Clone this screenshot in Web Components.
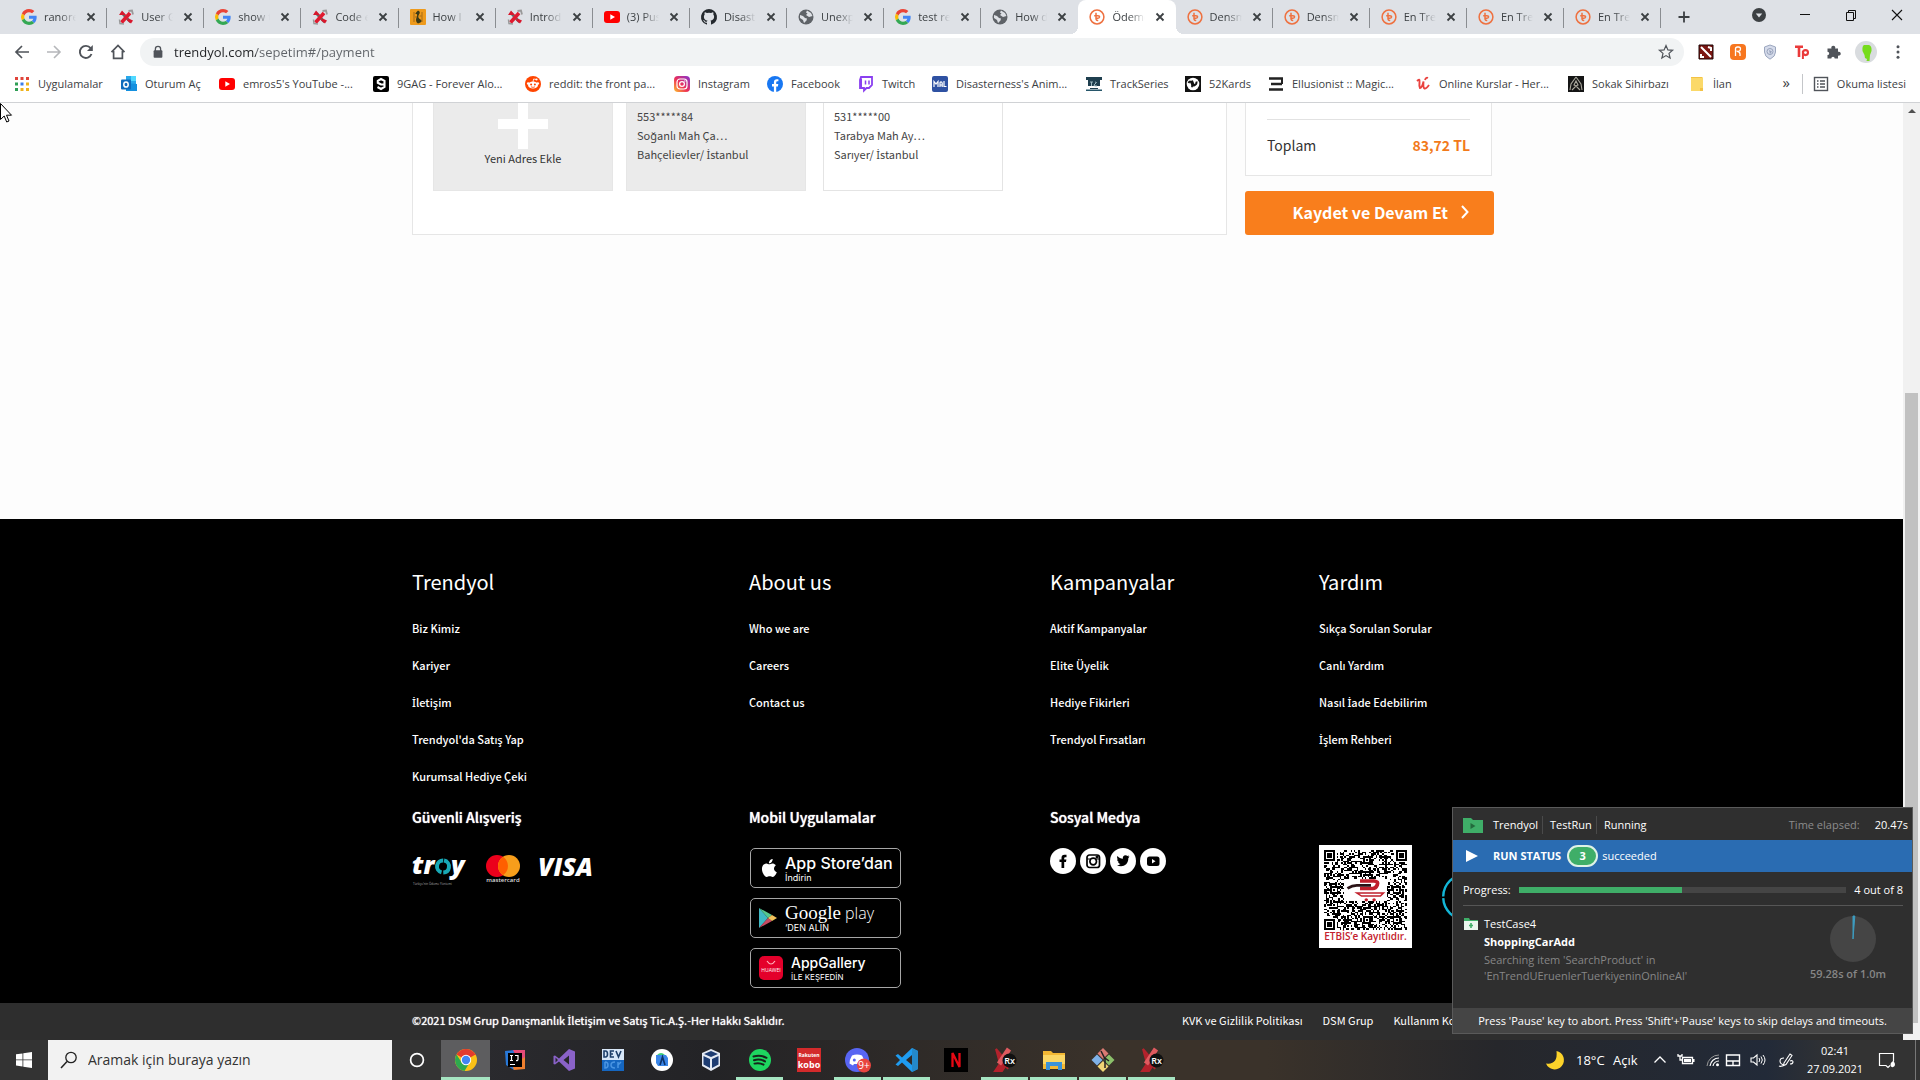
<!DOCTYPE html>
<html lang="tr">
<head>
<meta charset="utf-8">
<title>Ödeme - Trendyol</title>
<style>
html,body{margin:0;height:100%}
body{font-family:"Open Sans","Noto Sans",sans-serif;font-size:11px;overflow:hidden;
 --shop:"Noto Sans CJK SC","Noto Sans","Open Sans",sans-serif}
</style>
</head>
<body>
<desktop-screen></desktop-screen>
<script>
const ICONS = {
google:['0 0 48 48','<path fill="#ea4335" d="M24 9.5c3.5 0 6.700 1.200 9.200 3.600l6.900-6.900C35.900 2.400 30.500 0 24 0 14.600 0 6.500 5.400 2.600 13.200l8 6.200C12.400 13.700 17.700 9.500 24 9.500z"/><path fill="#4285f4" d="M47 24.500c0-1.600-.2-3.100-.4-4.500H24v9h12.900c-.6 3-2.200 5.500-4.700 7.200l7.700 6C44.400 38 47 31.800 47 24.500z"/><path fill="#fbbc05" d="M10.500 28.600a14.500 14.500 0 0 1 0-9.200l-8-6.200a24 24 0 0 0 0 21.600z"/><path fill="#34a853" d="M24 48c6.500 0 11.900-2.100 15.900-5.800l-7.700-6c-2.200 1.500-4.900 2.300-8.200 2.300-6.300 0-11.600-4.200-13.500-9.900l-8 6.200C6.500 42.600 14.600 48 24 48z"/>'],
ranorex:['0 0 16 16','<path d="M3.500 3.500l9 9.500" stroke="#666" stroke-width="2.600"/><path d="M12 4L3.500 13.500" stroke="#e01a2f" stroke-width="3.600"/><path d="M1 6l3-4.500L8 6z" fill="#d8172c"/><path d="M10.500 9.500l4.500 2-2 3-4-3z" fill="#d8172c"/><path d="M10.500 2l3.500-.5 1 4" fill="none" stroke="#999" stroke-width="1.800"/><path d="M1.500 10.500l.5 4 4 .5" fill="none" stroke="#999" stroke-width="1.500"/>'],
stack:['0 0 16 16','<rect width="16" height="16" rx="1" fill="#ee9a1c"/><path d="M8 1.500q3 1 1 4t1.500 5-2.500 4q-3-2-1.500-6T6 5t2-3.500z" fill="#3c3a17"/><path d="M4 3v10M12 3v10M5 8h2M9.500 7h2" stroke="#a56a16"/>'],
youtube:['0 0 16 16','<rect y="2" width="16" height="12" rx="3" fill="#f00"/><path fill="#fff" d="M6.300 5.300v5.400L11 8z"/>'],
github:['0 0 16 16','<path fill="#24292e" d="M8 0a8 8 0 0 0-2.500 15.600c.4.100.5-.2.500-.4v-1.500c-2.200.5-2.700-.9-2.700-.9-.4-.9-.9-1.200-.9-1.200-.7-.5.100-.5.100-.5.800.1 1.200.8 1.200.8.700 1.200 1.900.9 2.300.7.100-.5.300-.9.500-1.100-1.800-.2-3.600-.9-3.600-4 0-.9.300-1.600.8-2.100-.1-.2-.4-1 .1-2.100 0 0 .7-.2 2.200.8a7.500 7.500 0 0 1 4 0c1.500-1 2.200-.8 2.200-.8.400 1.100.2 1.900.1 2.100.5.600.8 1.300.8 2.100 0 3.100-1.900 3.800-3.700 4 .3.200.6.700.6 1.500v2.200c0 .2.100.5.500.4A8 8 0 0 0 8 0z"/>'],
globe:['0 0 16 16','<circle cx="8" cy="8" r="7.500" fill="#5f6368"/><path fill="#dee1e6" d="M2 6l3 1 2 2 2 .5-.5 2L6 14l-1-3-3-2zM9 1.500l-1 2 1.500 1L8 6l3 2 3.500-1L13 4z"/>'],
trendyol:['0 0 16 16','<circle cx="8" cy="8" r="6.900" fill="none" stroke="#ee7140" stroke-width="1.500"/><path d="M7 3.800v5.700q0 2.300 2.200 1.800M5.200 6.800h3.600q2 0 1.700 1.400T7.500 9.200" fill="none" stroke="#ee7140" stroke-width="1.500"/>'],
close:['0 0 16 16','<path d="M4.500 4.500l7 7M11.500 4.500l-7 7" stroke="#3c4043" stroke-width="1.800"/>'],
plus:['0 0 16 16','<path d="M8 2.500v11M2.500 8h11" stroke="#3c4043" stroke-width="1.800"/>'],
drop:['0 0 16 16','<circle cx="8" cy="8" r="7" fill="#3c4043"/><path d="M4.800 6.500h6.400L8 10.500z" fill="#dee1e6"/>'],
min:['0 0 16 16','<path d="M3 7.500h10" stroke="#111"/>'],
restore:['0 0 16 16','<path d="M3.500 5.500h7v8h-7zM5.500 5.500v-2h7v8h-2" fill="none" stroke="#111"/>'],
winclose:['0 0 16 16','<path d="M3 3l10 10M13 3L3 13" stroke="#111" stroke-width="1.100"/>'],
back:['0 0 16 16','<path d="M15 8H2M8 2L2 8l6 6" fill="none" stroke="#50545a" stroke-width="1.700"/>'],
fwd:['0 0 16 16','<path d="M1 8h13M8 2l6 6-6 6" fill="none" stroke="#b5b7ba" stroke-width="1.600"/>'],
reload:['0 0 16 16','<path d="M13.500 10A6 6 0 1 1 12.600 4.200" fill="none" stroke="#50545a" stroke-width="1.900"/><path d="M14.800 1v6H9z" fill="#50545a"/>'],
home:['0 0 16 16','<path d="M1.500 8.200L8 1.500l6.500 6.700M3.600 7v7.300h8.800V7" fill="none" stroke="#50545a" stroke-width="1.700"/>'],
lock:['0 0 16 16','<rect x="3" y="6" width="10" height="8.500" rx="1" fill="#50545a"/><path d="M5 7V4.500a3 3 0 0 1 6 0V7" fill="none" stroke="#50545a" stroke-width="1.500"/>'],
star:['0 0 16 16','<path d="M8 1.600l1.900 4.300 4.700.4-3.600 3.100 1.100 4.600L8 11.600 3.900 14 5 9.400 1.400 6.300l4.700-.4z" fill="none" stroke="#50545a" stroke-width="1.200"/>'],
dota:['0 0 16 16','<rect x="1" y="1" width="14" height="14" fill="#7c1712"/><path d="M3 3l10 10M10 3l3 1v3M3 10v3h3" stroke="#fff" stroke-width="2" fill="none"/><path d="M1 1h14v14H1z" fill="none" stroke="#1c0706"/>'],
honey:['0 0 16 16','<rect width="16" height="16" rx="4" fill="#f7761f"/><path d="M5.500 12V5q0-2 2-2h1q2 0 2 2t-2 2.500q-1.500.5-1.500-1M8 7.500q2.500.5 2 4.500" fill="none" stroke="#fff" stroke-width="1.300"/>'],
shield:['0 0 16 16','<path d="M8 1l5.500 2v5q0 4.500-5.500 7.200Q2.500 12.500 2.500 8V3z" fill="#d5dbea" stroke="#9ba6be"/><circle cx="8" cy="7.500" r="3" fill="none" stroke="#97a2bb"/><path d="M7 6l3 1.500L8 10z" fill="#97a2bb"/>'],
tp:['0 0 16 16','<path d="M1 2.800h8M5 2.800V13" stroke="#ea3a3a" stroke-width="2.600"/><circle cx="11.500" cy="8.600" r="2.500" fill="none" stroke="#ea3a3a" stroke-width="2.100"/><path d="M8.900 7v8" stroke="#ea3a3a" stroke-width="2"/>'],
puzzle:['0 0 16 16','<path fill="#50545a" d="M1.500 4.500h4a2 2 0 1 1 3.600 0H12v3.300a2 2 0 1 1 0 3.700v3H8.700a1.700 1.700 0 1 0-3.400 0H1.500v-3.400a1.700 1.700 0 1 0 0-3.400z"/>'],
avatar:['0 0 22 22','<circle cx="11" cy="11" r="11" fill="#d9dcdf"/><path d="M9 4h5q3 1 2.500 6L15 14l-.5 6h-3l.5-2-2-1-.5-3-2-4q-.5-5 1.500-6z" fill="#76dc1b"/>'],
menu:['0 0 16 16','<g fill="#50545a"><circle cx="8" cy="2.800" r="1.500"/><circle cx="8" cy="8" r="1.500"/><circle cx="8" cy="13.200" r="1.500"/></g>'],
apps:['0 0 16 16','<g><path fill="#e0443a" d="M1 1h3v3H1zM6.500 1h3v3h-3zM12 1h3v3h-3z"/><path fill="#3b7de8" d="M6.500 6.500h3v3h-3z"/><path fill="#2f9e55" d="M1 6.500h3v3H1zM1 12h3v3H1z"/><path fill="#efb31c" d="M12 6.500h3v3h-3zM6.500 12h3v3h-3zM12 12h3v3h-3z"/></g>'],
outlook:['0 0 16 16','<path d="M5 0h10v8H5z" fill="#28a8ea"/><path d="M10 0h5v5h-5z" fill="#50d9ff"/><path d="M5 7l11 1v7H5z" fill="#1490df"/><rect y="3.500" width="10" height="10" rx="1" fill="#0f6cbd"/><ellipse cx="5" cy="8.500" rx="2.200" ry="2.600" fill="none" stroke="#fff" stroke-width="1.500"/>'],
gag:['0 0 16 16','<rect width="16" height="16" rx="2" fill="#000"/><path d="M11.500 8.500L8 8.500 4.800 6.800V4.800L8 3l3.500 1.800v6L8 13l-3.500-2" fill="none" stroke="#fff" stroke-width="2.100"/>'],
reddit:['0 0 16 16','<circle cx="8" cy="8" r="8" fill="#ff4500"/><ellipse cx="8" cy="9" rx="5" ry="3.600" fill="#fff"/><circle cx="3.200" cy="7.500" r="1.300" fill="#fff"/><circle cx="12.800" cy="7.500" r="1.300" fill="#fff"/><circle cx="11.500" cy="3.500" r="1.100" fill="#fff"/><path d="M8 6l.6-3 2.900.5" stroke="#fff" fill="none" stroke-width=".8"/><circle cx="6.100" cy="8.500" r="1" fill="#ff4500"/><circle cx="9.900" cy="8.500" r="1" fill="#ff4500"/><path d="M6 10.800q2 1.200 4 0" stroke="#ff4500" fill="none" stroke-width=".8"/>'],
instagram:['0 0 16 16','<linearGradient id="g" x1="0" y1="1" x2="1" y2="0"><stop offset="0" stop-color="#fdc22f"/><stop offset=".45" stop-color="#ed2f58"/><stop offset="1" stop-color="#8334d2"/></linearGradient><rect width="16" height="16" rx="4" fill="url(#g)"/><rect x="3" y="3" width="10" height="10" rx="3" fill="none" stroke="#fff" stroke-width="1.200"/><circle cx="8" cy="8" r="2.400" fill="none" stroke="#fff" stroke-width="1.200"/><circle cx="10.900" cy="5" r=".7" fill="#fff"/>'],
facebook:['0 0 16 16','<circle cx="8" cy="8" r="8" fill="#1877f2"/><path fill="#fff" d="M6.900 16v-5.600H5V8h1.900V6.300c0-2 1.100-3.100 2.900-3.100l1.600.1v2h-1q-1.200 0-1.200 1.200V8h2.100l-.4 2.400H9.200V16z"/>'],
twitch:['0 0 16 16','<path d="M3 1h11v8l-3 3H8.500L6 14.500V12H2V4z" fill="#fff" stroke="#8a3ff0" stroke-width="1.800"/><path d="M2 4l2-2v9H2z" fill="#8a3ff0"/><path d="M7.500 4.500v4M11 4.500v4" stroke="#8a3ff0" stroke-width="1.500"/>'],
mal:['0 0 16 16','<rect width="16" height="16" rx="2" fill="#2e51a2"/><path d="M2 11V5.500l2 2.500 2-2.500V11M8 11V7q0-1.200 1-1.200T10.200 7v4M8 9h2M12 5v5.500h2.500" fill="none" stroke="#fff" stroke-width="1.200"/>'],
track:['0 0 16 16','<path d="M0 1h16v3H0zM2 4h12v6H2zM4 12h8v1H4z" fill="#1f3f4f"/><path d="M0 13.500h16V15H0z" fill="#27566a"/><path d="M4 6h3M5.500 6v4M9 6q3 0 0 2t2 2" stroke="#9db7bf" fill="none"/>'],
kards:['0 0 16 16','<rect width="16" height="16" fill="#111"/><circle cx="8" cy="8" r="6.300" fill="#fff"/><path d="M3.500 7q1.500-3 3 0t0 4M7 4.500l2 5q3-1 2.500-4" fill="none" stroke="#111" stroke-width="1.900"/>'],
ellusion:['0 0 16 16','<path d="M1 2.500h14M3 8h11M1 13.500h14" stroke="#222" stroke-width="2.700"/><path d="M14 2v6" stroke="#222" stroke-width="2"/>'],
udemy:['0 0 16 16','<path d="M2 5q3-3 2.500 1T5 12q2 0 3.500-6.500Q8 12 9.500 12.500T14 9M10 4q1-3 3-2" fill="none" stroke="#e9423f" stroke-width="1.900"/>'],
sokak:['0 0 16 16','<rect width="16" height="16" fill="#151515"/><path d="M8 1L3 8l-1 6M8 1l5 7 1 6M8 5l-2 4 2 1 2-1zM4 14l4-4 4 4" fill="none" stroke="#aaa89d" stroke-width="1.100"/>'],
folder:['0 0 16 16','<path d="M2 1h11q1 0 1 1v12q0 1-1 1H2z" fill="#fbd969"/><path d="M2 1h11v1H2zM11 12h3v3h-3z" fill="#f3c245"/>'],
list:['0 0 16 16','<rect x="1.500" y="1.500" width="13" height="13" fill="none" stroke="#50545a" stroke-width="1.400"/><path d="M4 5h1.500M7 5h5M4 8h1.500M7 8h5M4 11h1.500M7 11h5" stroke="#50545a" stroke-width="1.300"/>'],
chevron:['0 0 10 16','<path d="M2 2l5.500 6L2 14" fill="none" stroke="#fff" stroke-width="2"/>'],
bigplus:['0 0 50 50','<path d="M20 0h10v20h20v10H30v20H20V30H0V20h20z" fill="#fff"/>'],
scrollup:['0 0 16 16','<path d="M4 10h8L8 6z" fill="#505050"/>'],
mastercard:['0 0 36 28','<circle cx="12" cy="11" r="11" fill="#eb001b"/><circle cx="24" cy="11" r="11" fill="#f79e1b"/><path d="M18 1.800a11 11 0 0 1 0 18.400 11 11 0 0 1 0-18.400z" fill="#ff5f00"/><text x="18" y="27" fill="#ddd" font-family="Open Sans" font-weight="600" font-size="6" text-anchor="middle">mastercard</text>'],
visa:['0 0 56 26','<text x="0" y="20" fill="#fff" font-family="Open Sans" font-style="italic" font-weight="800" font-size="25">VISA</text>'],
troy:['0 0 56 32','<g font-family="Open Sans" font-weight="800" font-style="italic" fill="#fff"><text x="0" y="21" font-size="25">tr</text><text x="39" y="21" font-size="25">y</text></g><circle cx="31" cy="13.500" r="6" fill="none" stroke="#18a9b7" stroke-width="4" stroke-dasharray="17 1.850" transform="rotate(-80 31 13.500)"/><text x="1" y="32" fill="#aaa" font-family="Open Sans" font-size="3">Türkiye’nin Ödeme Yöntemi</text>'],
apple:['0 0 18 22','<path fill="#fff" d="M15 11.600c0-2.200 1.800-3.300 1.900-3.400-1-1.500-2.600-1.700-3.200-1.800-1.400-.1-2.700.8-3.400.8s-1.800-.8-2.900-.8C5.900 6.500 4.500 7.300 3.700 8.700c-1.600 2.800-.4 6.800 1.100 9 .8 1.100 1.700 2.300 2.900 2.300s1.600-.7 3-.7 1.800.7 3 .7 2-1.100 2.800-2.200c.9-1.300 1.200-2.500 1.300-2.600-.1 0-2.800-1-2.800-3.600zM12.700 4.900c.6-.8 1.100-1.800.9-2.900-.9 0-2 .6-2.700 1.400-.6.700-1.100 1.800-1 2.800 1.100.1 2.200-.5 2.800-1.300z"/>'],
play:['0 0 18 20','<path d="M0 0l9 10-9 10z" fill="#3fb8c4"/><path d="M0 0l13 7-4 3z" fill="#55c68e"/><path d="M0 20l13-7-4-3z" fill="#c84a62"/><path d="M13 7l5 3-5 3-4-3z" fill="#f2c25b"/>'],
huawei:['0 0 24 24','<rect width="24" height="24" rx="5" fill="#e4002b"/><path d="M8 5q4 6 8 0" fill="none" stroke="#ffb3bd" stroke-width="1.200"/><text x="12" y="15.500" fill="#fff" font-family="Open Sans" font-size="5" text-anchor="middle">HUAWEI</text>'],
sfb:['0 0 26 26','<circle cx="13" cy="13" r="13" fill="#fff"/><path d="M11.500 20v-6H9.500v-2.500h2V9.700q0-3 3-3h2v2.500h-1.300q-1 0-1 1v1.300h2.200L16 14h-1.800v6z" fill="#000"/>'],
sig:['0 0 26 26','<circle cx="13" cy="13" r="13" fill="#fff"/><rect x="7" y="7" width="12.500" height="12.500" rx="2.500" fill="none" stroke="#000" stroke-width="1.700"/><circle cx="13.200" cy="13.500" r="3.300" fill="none" stroke="#000" stroke-width="1.700"/><path d="M7 11h4M15.500 11h4M16 8.300h2v1.500h-2z" stroke="#000"/>'],
stw:['0 0 26 26','<circle cx="13" cy="13" r="13" fill="#fff"/><path d="M19.500 8.500l-1.200 1.800c.2 5-3.500 8-7.200 8-1.700 0-3.100-.4-4.300-1.100 1.500 0 2.600-.3 3.700-1.200-1.300-.2-2-.9-2.400-1.900h1.100c-1.400-.6-2-1.500-2.100-2.900l1 .3C6.900 10.400 6.800 9 7.500 7.900c1.500 1.700 3.200 2.600 5.400 2.800-.4-2 .8-3.400 2.600-3.400.8 0 1.400.3 2 .8l1.600-.6-.9 1.300z" fill="#000"/>'],
syt:['0 0 26 26','<circle cx="13" cy="13" r="13" fill="#fff"/><rect x="7" y="8.500" width="12.500" height="9.500" rx="2.500" fill="#000"/><path d="M12 11v4.500l3.500-2.200z" fill="#fff"/>'],
ring:['0 0 48 48','<circle cx="24" cy="24" r="22.800" fill="none" stroke="#13b5d6" stroke-width="2.400" stroke-dasharray="70 1.630"/>'],
testfolder:['0 0 20 16','<path d="M0 1h8l2 2h10v13H0z" fill="#3fae68"/><path d="M7.500 6v6l5-3z" fill="#236a3c"/>'],
testfolder2:['0 0 14 12','<path d="M0 0h5l1 2h8v10H0z" fill="#3fae68"/><path d="M0 3h14v9H0z" fill="#e9f7ee"/><path d="M7 5v5M5 7.500h4" stroke="#3fae68" stroke-width="1.600"/>'],
run:['0 0 12 12','<path d="M0 0v12l12-6z" fill="#fff"/>'],
pie:['0 0 46 46','<circle cx="23" cy="23" r="23" fill="#454545"/><path d="M23 23V0h1.800z" fill="#3d9cc0" stroke="#3d9cc0"/>'],
cursor:['0 0 12 20','<path d="M.5.500v16l3.700-3.500 2.500 6 2.300-1-2.500-5.800H11.500z" fill="#fff" stroke="#000"/>'],
windows:['0 0 16 16','<path fill="#fff" d="M0 2.300l6.500-.9v6.100H0zM7.300 1.300L16 0v7.500H7.300zM0 8.300h6.500v6.200L0 13.600zM7.300 8.300H16V16l-8.700-1.300z"/>'],
search:['0 0 18 18','<circle cx="11" cy="6.500" r="5.200" fill="none" stroke="#222" stroke-width="1.300"/><path d="M7 10.500L1 17" stroke="#222" stroke-width="1.500"/>'],
cortana:['0 0 24 24','<circle cx="12" cy="12" r="6.400" fill="none" stroke="#fff" stroke-width="1.700"/>'],
chrome:['0 0 24 24','<circle cx="12" cy="12" r="11" fill="#fbc116"/><path d="M12 12L2.500 6.500A11 11 0 0 1 21.500 6.500z" fill="#e33b2e"/><path d="M2.500 6.500a11 11 0 0 0 8 16.400L16 14 8 15z" fill="#2da94f"/><path d="M12 7h9.800a11 11 0 0 0-.5-1H8z" fill="#e33b2e"/><circle cx="12" cy="12" r="5.200" fill="#fff"/><circle cx="12" cy="12" r="4.200" fill="#4285f4"/>'],
intellij:['0 0 24 24','<path d="M2 3l9-1v20l-8-5z" fill="#2878d8"/><path d="M10 2h12v9l-7 2z" fill="#e44b78"/><path d="M22 9v12l-11 1-2-5z" fill="#ee7f2f"/><rect x="5" y="5" width="14" height="14" fill="#000"/><path d="M7 7.500h3M8.500 7.500v5M7 12.500h3M12 7.500h3v4q0 1.200-2 1M7 16.500h5" fill="none" stroke="#fff" stroke-width="1.200"/>'],
vs:['0 0 24 24','<path d="M17 1l6 2.500v17L17 23 7 13.500 3 16.500 1.500 16V8L3 7.500l4 3zM17 7.500L11.500 12l5.500 4.500zM3.500 9.500v5L6 12z" fill="#8a62c9" fill-rule="evenodd"/>'],
dev:['0 0 24 24','<rect x="1" y="1" width="22" height="11" fill="#d7e6f8"/><rect x="1" y="12" width="22" height="11" fill="#1566c0"/><path d="M3 3v6h1.500q2 0 2-3t-2-3zM13 3H9.500v6H13M9.500 6H12M15 3l2.500 6L20 3" fill="none" stroke="#1d3e69" stroke-width="1.600"/><path d="M4 14v6q3 0 3-3t-3-3M14 14q-4 0-4 3t4 3M17 14v6M20 14l-3 3" fill="none" stroke="#4a95e2" stroke-width="1.500"/>'],
android:['0 0 24 24','<circle cx="12" cy="12" r="11" fill="#fff"/><path d="M6 7h10l2 3v8H8l-2-3z" fill="#3a86e8"/><path d="M7 7q4-4 8 0z" fill="#3ecf79"/><path d="M10 17l2.500-8 2.500 8" fill="none" stroke="#0d3269" stroke-width="1.700"/>'],
vbox:['0 0 24 24','<path d="M12 1l9 4v13l-9 5-9-5V5z" fill="#e4eaf4"/><path d="M12 3l7 3-7 3-7-3zM4.500 8L11 11v9l-6.500-3.500zM19.500 8L13 11v9l6.500-3.500z" fill="#1d3c72"/>'],
spotify:['0 0 24 24','<circle cx="12" cy="12" r="11" fill="#1ed760"/><path d="M5.500 8.500q7-2 13 1.300M6 12.200q6-1.600 11 1.200M6.500 15.600q5-1.200 9 1" fill="none" stroke="#16251b" stroke-width="2" stroke-linecap="round"/>'],
kobo:['0 0 24 24','<rect width="24" height="24" fill="#d32a2b"/><text x="12" y="9" fill="#fff" font-family="Open Sans" font-weight="700" font-size="5" text-anchor="middle">Rakuten</text><text x="12" y="20" fill="#fff" font-family="Open Sans" font-weight="700" font-size="9" text-anchor="middle">kobo</text>'],
discord:['0 0 26 24','<circle cx="12" cy="12" r="12" fill="#5865f2"/><path d="M7 7.500q5-2 10 0 2.500 4 2.500 8l-3.500 2-1-1.500H9L8 17.500l-3.500-2q0-4 2.500-8z" fill="#fff"/><circle cx="9.300" cy="12" r="1.500" fill="#5865f2"/><circle cx="19" cy="17.500" r="7" fill="#e8453f"/><text x="19" y="21" fill="#fff" font-family="Open Sans" font-size="10" text-anchor="middle">9+</text>'],
vscode:['0 0 24 24','<path d="M17 0l6 3v18l-6 3L7 14.500 3 18l-2.500-1.500L5 12 .500 7.500 3 6l4 3.500zM17 7l-6 5 6 5z" fill="#1f9cf0" fill-rule="evenodd"/><path d="M17 0l6 3v18l-6 3z" fill="#2489ca"/>'],
netflix:['0 0 24 24','<rect width="24" height="24" fill="#000"/><path d="M8.500 19V5L15.500 19V5" fill="none" stroke="#e50914" stroke-width="2.300"/>'],
rx:['0 0 24 24','<path d="M3 1l6 7-3 4zM2 23l8-12 5 3-6 9zM9 12l6 9" fill="#b3222c" stroke="#b3222c" stroke-width="2"/><path d="M16 1L6 16" stroke="#e05a5f" stroke-width="5"/><circle cx="16.500" cy="12.500" r="7" fill="#111"/><text x="16.500" y="16" fill="#fff" font-family="Open Sans" font-weight="600" font-size="9" text-anchor="middle">Rx</text>'],
explorer:['0 0 24 24','<path d="M1 3h8l2 2h12v16H1z" fill="#f3b834"/><path d="M1 7h22v9H1z" fill="#fbd765"/><path d="M4 14h16v8h-4v-4H8v4H4z" fill="#3b93d9"/>'],
git:['0 0 24 24','<path d="M12 0l5.500 5.500L12 11 6.500 5.500z" fill="#d97a72"/><path d="M6 6.500l5.500 5.500L6 17.500.500 12z" fill="#7fb2e8"/><path d="M18 6.500l5.500 5.500-5.500 5.500-5.500-5.500z" fill="#8bc06a"/><path d="M12 13l5.500 5.500L12 24l-5.500-5.500z" fill="#f0d676"/><path d="M10 3l4 8v9M14 10l4 3" fill="none" stroke="#222" stroke-width="1.500"/>'],
moon:['0 0 20 20','<path d="M11.500 1A9.300 9.300 0 1 1 1 13.500Q13 15 11.500 1z" fill="#fcd32a"/>'],
up:['0 0 16 16','<path d="M2.500 10.500L8 5l5.500 5.500" fill="none" stroke="#fff" stroke-width="1.300"/>'],
battery:['0 0 18 16','<path d="M5.500 5.500h10v6h-10z" fill="none" stroke="#fff" stroke-width="1.300"/><path d="M7 7h7v3H7zM16 7h1.500v3H16z" fill="#fff"/><path d="M1 2v2h4V2M3 4v4h3" fill="none" stroke="#fff" stroke-width="1.300"/>'],
wifi:['0 0 16 16','<path d="M2 14A12 12 0 0 1 14 3" fill="none" stroke="#999"/><path d="M5 14a9 9 0 0 1 9-8M8 14a6 6 0 0 1 6-5" fill="none" stroke="#fff" stroke-width="1.200"/><circle cx="12.500" cy="12.800" r="1.500" fill="#fff"/>'],
touch:['0 0 16 16','<path d="M1.500 3h13v10.500h-13zM1.500 9h13M8 9v4" fill="none" stroke="#fff" stroke-width="1.400"/>'],
speaker:['0 0 16 16','<path d="M1 6h2.500L7 3v10L3.500 10H1z" fill="none" stroke="#fff" stroke-width="1.100"/><path d="M9 6q1.500 2 0 4M11 4.500q2.700 3.500 0 7M13 3q4 5 0 10" fill="none" stroke="#fff"/>'],
pen:['0 0 16 16','<path d="M6 11l6-9 2 1.500-6 9-2.500 1zM6 6q-4 0-4 3t4 4q-3 2-5 1M12 9q3-1 3 1t-3 2" fill="none" stroke="#fff" stroke-width="1.100"/>'],
notice:['0 0 18 18','<path d="M12 14.500l-2 2-2-2H1.500v-12h14V10" fill="none" stroke="#fff" stroke-width="1.200"/><path d="M15.500 9.500q-3 2-3 4.500a2 2 0 0 0 2.700 2q2-.6 1.800-3z" fill="#fff"/>']
};

/* The shop typeface has no precomposed dotted capital I, so that letter is set in Noto Sans. */
const dotted = text => text.replace(/İ/g, '<span class="i">İ</span>');

const define = (name, css, html, init) => {
  const tpl = document.createElement('template');
  tpl.innerHTML = `<style>:host{display:block;box-sizing:border-box}*{box-sizing:border-box}a{color:inherit;text-decoration:none}button{border:0;padding:0;background:none;font:inherit;color:inherit}.i{font-family:"Noto Sans","Open Sans",sans-serif}${css}</style>${html}`;
  customElements.define(name, class extends HTMLElement {
    connectedCallback() {
      if (this.shadowRoot) return;
      const root = this.attachShadow({mode:'open'});
      root.append(tpl.content.cloneNode(true));
      if (init) init(root, this);
    }
  });
};

define('ui-icon', ':host{display:block;flex:none}svg{display:block;width:100%;height:100%;overflow:visible}', '', (root, el) => {
  const [box, body] = ICONS[el.getAttribute('name')];
  const [, , w, h] = box.split(' ');
  el.style.width = (el.getAttribute('w') || w) + 'px';
  el.style.height = (el.getAttribute('h') || h) + 'px';
  root.innerHTML += `<svg viewBox="${box}" aria-hidden="true">${body}</svg>`;
});

define('browser-tab', `
:host{flex:1 1 0;min-width:0;position:relative;height:34px}
.tab{display:flex;align-items:center;height:100%;padding:0 8px 0 11px;gap:7px;border-radius:8px 8px 0 0}
.tab span{flex:1;min-width:0;overflow:hidden;white-space:nowrap;line-height:20px;font-size:11px;color:#3c4043;-webkit-mask-image:linear-gradient(90deg,#000 50%,transparent)}
:host(:not([active]):not([plain])) .tab{background:linear-gradient(#8a8d91,#8a8d91) right 8px/1px 20px no-repeat}
:host([active]) .tab{background:#fff}
:host([active])::before,:host([active])::after{content:"";position:absolute;bottom:0;width:8px;height:8px}
:host([active])::before{left:-8px;background:radial-gradient(circle at 0 0,transparent 8px,#fff 8px)}
:host([active])::after{right:-8px;background:radial-gradient(circle at 100% 0,transparent 8px,#fff 8px)}`,
'<div class="tab" role="tab"><slot name="icon"></slot><span><slot></slot></span><button aria-label="Kapat"><ui-icon name="close"></ui-icon></button></div>');

define('window-tools', `
:host{display:flex;width:259px;flex:none;justify-content:space-between}
div{display:flex}
button{display:flex;align-items:center;justify-content:center;height:30px;width:46px}
.new{height:34px}`,
`<button class="new" aria-label="Yeni sekme"><ui-icon name="plus"></ui-icon></button>
<div><button aria-label="Sekme ara"><ui-icon name="drop"></ui-icon></button><button aria-label="Küçült"><ui-icon name="min"></ui-icon></button><button aria-label="Geri yükle"><ui-icon name="restore"></ui-icon></button><button aria-label="Kapat"><ui-icon name="winclose"></ui-icon></button></div>`);

define('tab-strip', `
:host{display:flex;background:#dee1e6;padding-left:10px;height:34px}
.tabs{display:flex;flex:1;min-width:0}`, `<div class="tabs" role="tablist"></div><window-tools></window-tools>`, root => {
  const tabs = [['google','ranorex'],['ranorex','User Guide'],['google','show text'],['ranorex','Code ex'],['stack','How I do'],['ranorex','Introduc'],['youtube','(3) Pusa'],['github','Disaster'],['globe','Unexpec'],['google','test rem'],['globe','How do'],['trendyol','Ödeme',1],['trendyol','Densmo'],['trendyol','Densmo'],['trendyol','En Trend'],['trendyol','En Trend'],['trendyol','En Trend']];
  root.querySelector('.tabs').innerHTML = tabs.map(([i,t,a], n) => `<browser-tab${a?' active':n===10?' plain':''}><ui-icon slot="icon" name="${i}" w="16" h="16"></ui-icon>${t}</browser-tab>`).join('');
});

define('nav-bar', `
:host{display:flex;align-items:center;height:36px;padding:0 6px;background:#fff}
button{display:flex;align-items:center;justify-content:center;width:32px;height:28px;flex:none}
form{display:flex;align-items:center;flex:1;height:28px;margin:0 6px;padding:0 2px 0 11px;background:#f1f3f4;border-radius:14px}
input{flex:1;border:0;outline:0;padding:0 0 0 9px;font:13px/20px "Open Sans",sans-serif;color:#202124;-webkit-text-fill-color:transparent;background:linear-gradient(90deg,#202124 91px,#5f6368 91px);-webkit-background-clip:text;background-clip:text}`,
`<button aria-label="Geri"><ui-icon name="back"></ui-icon></button><button aria-label="İleri"><ui-icon name="fwd"></ui-icon></button><button aria-label="Yenile"><ui-icon name="reload"></ui-icon></button><button aria-label="Ana sayfa"><ui-icon name="home"></ui-icon></button>
<form><ui-icon name="lock" w="14" h="14"></ui-icon><input aria-label="Adres" value="trendyol.com/sepetim#/payment"><button type="button" aria-label="Yer işareti"><ui-icon name="star"></ui-icon></button></form>
<button aria-label="Dota"><ui-icon name="dota"></ui-icon></button><button aria-label="Honey"><ui-icon name="honey"></ui-icon></button><button aria-label="Kalkan"><ui-icon name="shield"></ui-icon></button><button aria-label="Tp"><ui-icon name="tp"></ui-icon></button><button aria-label="Uzantılar"><ui-icon name="puzzle"></ui-icon></button><button aria-label="Profil"><ui-icon name="avatar"></ui-icon></button><button aria-label="Menü"><ui-icon name="menu"></ui-icon></button>`);

define('bookmark-bar', `
:host{display:flex;height:33px;padding:0 14px 4px 14px;background:#fff;border-bottom:1px solid #d0d2d5;align-items:center;color:#3c4043;font-size:11px;line-height:20px}
nav{flex:1;display:grid;grid-template-columns:107px 98px 154px 152px 149px 93px 91px 74px 154px 99px 83px 147px 153px 121px 1fr}
a{display:flex;align-items:center;gap:8px;white-space:nowrap}
.end{display:flex;align-items:center;gap:12px}
.end button{font-size:15px;line-height:16px;padding-bottom:4px}
.end a{border-left:1px solid #c4c6c9;padding-left:10px}`,
'<nav aria-label="Yer işaretleri"></nav><div class="end"><button aria-label="Diğer">»</button><a href="#"><ui-icon name="list"></ui-icon>Okuma listesi</a></div>', root => {
  const items = [['apps','Uygulamalar'],['outlook','Oturum Aç'],['youtube',"emros5's YouTube -..."],['gag','9GAG - Forever Alo...'],['reddit','reddit: the front pa...'],['instagram','Instagram'],['facebook','Facebook'],['twitch','Twitch'],['mal',"Disasterness's Anim..."],['track','TrackSeries'],['kards','52Kards'],['ellusion','Ellusionist :: Magic...'],['udemy','Online Kurslar - Her...'],['sokak','Sokak Sihirbazı'],['folder','İlan']];
  root.querySelector('nav').innerHTML = items.map(([i,t]) => `<a href="#"><ui-icon name="${i}"></ui-icon>${t}</a>`).join('');
});

define('address-card', `
:host{width:180px;height:88px;background:#ebebeb;border:1px solid #e6e6e6;border-top:0;overflow:hidden;font:11px/19px var(--shop);color:#444}
:host([outlined]){background:#fff;border-color:#e4e4e4;margin-left:4px}
:host([add]){display:flex;flex-direction:column;align-items:center;justify-content:flex-end;padding-bottom:22px;color:#333;text-align:center}
:host(:not([add])){padding:4px 10px}`, '<slot></slot>');

define('order-summary', `
:host{display:flex;flex-direction:column;gap:15px;width:249px;flex:none;font-family:var(--shop)}
.box{width:247px;background:#fff;border:1px solid #e6e6e6;border-top:0;padding:16px 21px 17px}
.row{display:flex;justify-content:space-between;border-top:1px solid #e2e2e2;padding-top:12px;font-size:14px;line-height:26px;color:#333}
b{color:#f27a1a}
button{display:flex;align-items:center;justify-content:flex-end;gap:12px;height:44px;padding:0 24px 2px;background:#f97e1c;border-radius:3px;color:#fff;font-size:16px;font-weight:700}`,
`<div class="box"><div class="row"><span>Toplam</span><b>83,72 TL</b></div></div><button>Kaydet ve Devam Et<ui-icon name="chevron"></ui-icon></button>`);

define('checkout-area', `
:host{background:#fdfdfd;padding-bottom:284px}
.wrap{display:flex;justify-content:space-between;width:1085px;padding-left:3px;margin:0 auto}
.list{display:flex;gap:13px;width:815px;height:132px;padding:0 20px;border:1px solid #e6e6e6;border-top:0;background:#fff}
p{margin:0}`,
`<div class="wrap"><div class="list">
<address-card add><ui-icon name="bigplus"></ui-icon><span>Yeni Adres Ekle</span></address-card>
<address-card><p>553*****84</p><p>Soğanlı Mah Ça…</p><p>Bahçelievler/ ${dotted('İstanbul')}</p></address-card>
<address-card outlined><p>531*****00</p><p>Tarabya Mah Ay…</p><p>Sarıyer/ ${dotted('İstanbul')}</p></address-card>
</div><order-summary></order-summary></div>`);

define('link-column', `
h2{margin:0 0 12px;font-size:20px;line-height:32px;font-weight:400}
a{display:block;font-size:11px;line-height:37px;font-weight:500}`, '<h2></h2>', (root, el) => {
  root.querySelector('h2').textContent = el.getAttribute('heading');
  el.getAttribute('links').split('|').forEach(t => { const a = document.createElement('a'); a.href = '#'; a.innerHTML = dotted(t); root.append(a); });
});

define('store-badge', `
a{display:flex;align-items:center;gap:8px;width:151px;height:40px;padding:0 8px;border:1px solid #a6a6a6;border-radius:5px;color:#fff;font-family:Inter,"Open Sans",sans-serif}
div{display:flex;flex-direction:column}
.t{font-size:16px;line-height:18px;font-weight:500;white-space:nowrap}
.s{font-size:9px;line-height:11px;white-space:nowrap}
:host([kind=google]) .t{font-family:"Open Sans",sans-serif;font-weight:300}
:host([kind=google]) .t ::slotted(b){font:19px/18px "Liberation Serif",serif}
:host([kind=huawei]) .t{font-size:14px}
:host([kind=huawei]) .s{font-size:8px}`,
'<a href="#"><slot name="icon"></slot><div><span class="t"><slot></slot></span><span class="s"><slot name="sub"></slot></span></div></a>');

define('qr-code', `
:host{width:93px;height:103px;background:#fff;padding:5px;flex:none}
svg{display:block;width:83px;height:80px}
.c{display:block;font:600 10px/13px "Open Sans",sans-serif;color:#c4202c;text-align:center;white-space:nowrap}`, '', root => {
  const N = 53; let d = '', s = 7;
  const rnd = () => (s = (s * 16807) % 2147483647) / 2147483647;
  const finder = (x, y) => (x < 8 && y < 8) || (x > N-9 && y < 8) || (x < 8 && y > N-9);
  for (let y = 0; y < N; y++) for (let x = 0; x < N; x++) {
    const r = rnd() < .5;
    if (r && !finder(x,y) && !(x > 12 && x < 40 && y > 18 && y < 34)) d += `M${x} ${y}h1v1h-1z`;
  }
  const f = (x,y) => `<path d="M${x} ${y}h7v7h-7zm1 1v5h5v-5zm1 1h3v3h-3z" fill-rule="evenodd"/>`;
  const a = (x,y) => `<path fill="#fff" d="M${x} ${y}h5v5h-5z"/><path d="M${x} ${y}h5v5h-5zm1 1v3h3v-3zm1 1h1v1h-1z" fill-rule="evenodd"/>`;
  root.innerHTML += `<svg viewBox="0 0 ${N} ${N}" preserveAspectRatio="none" shape-rendering="crispEdges" role="img" aria-label="ETBİS">${'<path d="'+d+'"/>'}${f(0,0)}${f(N-7,0)}${f(0,N-7)}${a(25,4)}${a(4,24)}${a(44,24)}${a(25,44)}${a(44,44)}
  <g fill="none" shape-rendering="auto" stroke-width="2.400"><path d="M23 20.500h9q3 .3 2 2.700t-3 2.300h-8" stroke="#c01f2b"/><path d="M15 25.500q3-2 6-2h9" stroke="#2a1216" stroke-width="1.800"/><path d="M21 28.500h17l-2 2H24z" stroke="#c01f2b" stroke-width="1"/></g><g shape-rendering="auto" fill="#c01f2b"><circle cx="27" cy="33" r="1.100"/><circle cx="32" cy="33" r="1.100"/></g></svg><span class="c">ETBİS’e Kayıtlıdır.</span>`;
});

define('site-footer', `
:host{background:#000;color:#fff;font-family:var(--shop);flex:1;display:flex;flex-direction:column}
.grid{display:grid;grid-template-columns:337px 301px 269px 1fr;width:1079px;margin:0 auto}
.links{padding-top:47px}
.extra{padding:10px 0 15px}
h3{margin:0 0 19px;font-size:14px;line-height:24px;font-weight:500;text-shadow:0 0 1px #fff}
.row{display:flex;align-items:center}
.pay{gap:17px;height:42px}
.apps{display:flex;flex-direction:column;gap:10px;padding-left:1px}
.social{gap:4px}
.qr{gap:30px;padding-top:40px;align-items:center}
.bar{background:#2e2e2e;flex:1}
.bar>div{display:flex;justify-content:space-between;align-items:center;width:1079px;height:34px;margin:0 auto;font-size:11px;line-height:20px}
.bar b{font-weight:400;text-shadow:0 0 1px #fff}
.bar nav{display:flex;gap:20px;width:309px;white-space:nowrap}`,
`<div class="grid links">
<link-column heading="Trendyol" links="Biz Kimiz|Kariyer|İletişim|Trendyol'da Satış Yap|Kurumsal Hediye Çeki"></link-column>
<link-column heading="About us" links="Who we are|Careers|Contact us"></link-column>
<link-column heading="Kampanyalar" links="Aktif Kampanyalar|Elite Üyelik|Hediye Fikirleri|Trendyol Fırsatları"></link-column>
<link-column heading="Yardım" links="Sıkça Sorulan Sorular|Canlı Yardım|Nasıl İade Edebilirim|İşlem Rehberi"></link-column>
</div>
<div class="grid extra">
<section><h3>Güvenli Alışveriş</h3><div class="row pay"><ui-icon name="troy"></ui-icon><ui-icon name="mastercard"></ui-icon><ui-icon name="visa"></ui-icon></div></section>
<section><h3>Mobil Uygulamalar</h3><div class="apps">
<store-badge><ui-icon slot="icon" name="apple"></ui-icon>App Store’dan<span slot="sub">İndirin</span></store-badge>
<store-badge kind="google"><ui-icon slot="icon" name="play"></ui-icon><b>Google</b> play<span slot="sub">‘DEN ALIN</span></store-badge>
<store-badge kind="huawei"><ui-icon slot="icon" name="huawei"></ui-icon>AppGallery<span slot="sub">İLE KEŞFEDİN</span></store-badge></div></section>
<section><h3>Sosyal Medya</h3><div class="row social"><a href="#" aria-label="Facebook"><ui-icon name="sfb"></ui-icon></a><a href="#" aria-label="Instagram"><ui-icon name="sig"></ui-icon></a><a href="#" aria-label="Twitter"><ui-icon name="stw"></ui-icon></a><a href="#" aria-label="YouTube"><ui-icon name="syt"></ui-icon></a></div></section>
<section><div class="row qr"><qr-code></qr-code><ui-icon name="ring"></ui-icon></div></section>
</div>
<div class="bar"><div><b>©2021 DSM Grup Danışmanlık ${dotted('İletişim')} ve Satış Tic.A.Ş.-Her Hakkı Saklıdır.</b><nav><a href="#">KVK ve Gizlilik Politikası</a><a href="#">DSM Grup</a><a href="#">Kullanım Koşulları</a></nav></div></div>`);

define('scroll-rail', `
:host{width:17px;flex:none;background:#f1f1f1;display:flex;flex-direction:column}
.thumb{width:13px;margin:274px auto 17px;flex:1;background:#c1c1c1}
ui-icon{align-self:center}`, '<ui-icon name="scrollup"></ui-icon><div class="thumb"></div>');

define('run-panel', `
:host{position:absolute;right:7px;bottom:46px;width:461px;background:#2f2f2f;border:1px solid #5a5a5a;color:#fff;font-size:11px;line-height:16px}
.row{display:flex;align-items:center;white-space:nowrap}
.head{height:32px;padding:2px 4px 0 10px}
.head ui-icon{margin-right:10px}
.head span{width:50px;border-right:1px solid #4a4a4a;margin-right:7px;line-height:18px}
.head span:nth-of-type(2){width:47px}
.head span:nth-of-type(3){border:0;flex:1}
.head i{font-style:normal;color:#8c8c8c;margin-right:15px}
.status{height:32px;background:#2a6cb2;padding-left:13px}
.status ui-icon{margin-right:15px}
.status em{font-style:normal;font-weight:700;width:31px;height:22px;line-height:18px;border:2px solid #dff2e6;border-radius:11px;background:#3fae68;text-align:center;margin:0 4px 0 6px}
.body{padding:10px 9px 0 10px;height:136px}
.prog{gap:8px;padding-bottom:7px;border-bottom:1px solid #565656}
.prog div{flex:1;height:6px;background:#454545}
.prog div div{width:50%;height:6px;background:#3fae68}
.case{display:flex;justify-content:space-between;padding:10px 17px 0 1px}
.case .l{display:grid;grid-template-columns:14px auto;column-gap:6px;row-gap:2px;align-items:center;align-content:start}
.case .l>:not(ui-icon){grid-column:2}
.g{color:#868686}
.r{display:flex;flex-direction:column;align-items:center;gap:4px}
.r ui-icon{margin-left:10px}
.r .g{font-weight:600}
.foot{background:#454545;height:25px;line-height:26px;text-align:center;white-space:nowrap}`,
`<div class="row head"><ui-icon name="testfolder"></ui-icon><span>Trendyol</span><span>TestRun</span><span>Running</span><i>Time elapsed:</i>20.47s</div>
<div class="row status"><ui-icon name="run"></ui-icon><b>RUN STATUS</b><em>3</em>succeeded</div>
<div class="body"><div class="row prog">Progress:<div role="progressbar" aria-valuenow="4" aria-valuemax="8"><div></div></div>4 out of 8</div>
<div class="case"><div class="l"><ui-icon name="testfolder2"></ui-icon><span>TestCase4</span><b>ShoppingCarAdd</b><div class="g">Searching item 'SearchProduct' in<br>'EnTrendUEruenlerTuerkiyeninOnlineAl'</div></div><div class="r"><ui-icon name="pie"></ui-icon><span class="g">59.28s of 1.0m</span></div></div></div>
<div class="foot">Press 'Pause' key to abort. Press 'Shift'+'Pause' keys to skip delays and timeouts.</div>`);

define('task-bar', `
:host{display:flex;height:40px;flex:none;color:#fff;background:linear-gradient(90deg,#2a2a2e 25%,#232326 37%,#3a322a 58%,#3a322a 66%,#26272b 78%,#222a38 92%,#333 96%)}
button{display:flex;align-items:center;justify-content:center}
.start{width:48px;background:#333}
.search{display:flex;align-items:center;gap:10px;width:344px;padding-left:12px;background:#f2f2f2}
input{border:0;outline:0;background:none;padding:0;flex:1;font:14px/20px "Open Sans",sans-serif}
input::placeholder{color:#333}
.apps{display:flex;flex:1}
.apps button{width:49px;border-bottom:3px solid transparent;padding-top:3px;background-clip:padding-box}
.apps .open{border-image:linear-gradient(90deg,transparent 4px,#a6e5c2 4px,#a6e5c2 45px,transparent 45px) 3}
.apps .active{background:#5d5d5f;border-bottom-color:#a6e5c2}
.apps .first{background:#333}
.tray{display:grid;grid-template-columns:31px 37px 39px 25px 28px 20px 25px 28px 24px 66px 38px 1fr;align-items:center;width:375px;flex:none;font-size:13px;white-space:nowrap}
.clock{font-size:11px;line-height:18px;text-align:center}
.mid{justify-self:center}
.edge{border-left:1px solid #777;height:40px;justify-self:end;width:5px}`,
`<button class="start" aria-label="Başlat"><ui-icon name="windows"></ui-icon></button>
<label class="search"><ui-icon name="search"></ui-icon><input aria-label="Ara" placeholder="Aramak için buraya yazın"></label>
<div class="apps"></div>
<div class="tray"><ui-icon name="moon"></ui-icon><span>18°C</span><span>Açık</span><ui-icon name="up"></ui-icon><ui-icon name="battery"></ui-icon><ui-icon name="wifi"></ui-icon><ui-icon name="touch"></ui-icon><ui-icon name="speaker"></ui-icon><ui-icon name="pen"></ui-icon><div class="clock">02:41<br>27.09.2021</div><ui-icon class="mid" name="notice"></ui-icon><span class="edge"></span></div>`, root => {
  const apps = [['cortana','first'],['chrome','active'],['intellij'],['vs'],['dev'],['android'],['vbox'],['spotify','open'],['kobo'],['discord','open'],['vscode','open'],['netflix'],['rx','open'],['explorer','open'],['git','open'],['rx','open']];
  root.querySelector('.apps').innerHTML = apps.map(([i,c='']) => `<button class="${c}" aria-label="${i}"><ui-icon name="${i}"></ui-icon></button>`).join('');
});

define('desktop-screen', `
:host{display:flex;flex-direction:column;height:100vh;position:relative;overflow:hidden}
main{display:flex;flex:1;min-height:0;overflow:hidden}
.page{flex:1;display:flex;flex-direction:column;min-width:0}
.cursor{position:absolute;left:0;top:103px}`,
`<header><tab-strip></tab-strip><nav-bar></nav-bar><bookmark-bar></bookmark-bar></header>
<main><div class="page"><checkout-area></checkout-area><site-footer></site-footer></div><scroll-rail></scroll-rail></main>
<task-bar></task-bar><run-panel></run-panel><ui-icon class="cursor" name="cursor"></ui-icon>`);
</script>
</body>
</html>
